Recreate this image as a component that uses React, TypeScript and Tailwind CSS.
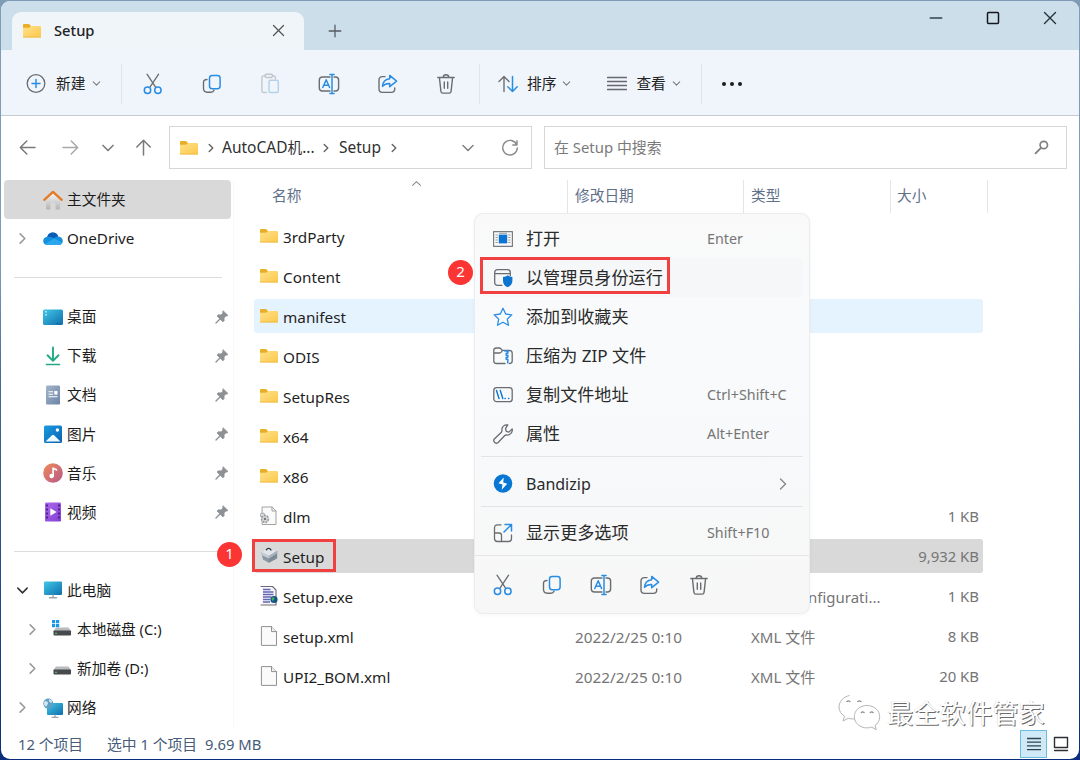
import { ReactNode } from 'react';
import clsx from 'clsx';

type IconProps = { size?: number; className?: string; children?: ReactNode; box?: string };

function Icon({ size = 20, className, children, box = '0 0 20 20' }: IconProps) {
  return (
    <svg
      width={size}
      height={size}
      viewBox={box}
      fill="none"
      strokeLinecap="round"
      strokeLinejoin="round"
      className={clsx('shrink-0', className)}
    >
      {children}
    </svg>
  );
}

const GRAY = '#6a6d70';
const BLUE = '#2a8de4';

const CutIcon = () => (
  <Icon size={22} box="0 0 22 22">
    <path d="M5 1.2 13.6 14.2M16.6 1.2 8 14.2" stroke={GRAY} strokeWidth="1.3" />
    <circle cx="5.5" cy="17.2" r="3.2" stroke={BLUE} strokeWidth="1.5" />
    <circle cx="15.9" cy="17.2" r="3.2" stroke={BLUE} strokeWidth="1.5" />
  </Icon>
);

const CopyIcon = () => (
  <Icon size={22} box="0 0 22 22">
    <path d="M6 6.5C3.500 6.500 2.500 7.600 2.500 9.500v5.800c0 2.500 1.300 3.900 3.800 3.900h3.600c1.600 0 2.700-.7 3.100-2" stroke={GRAY} strokeWidth="1.400" />
    <rect x="8.500" y="2.500" width="10.600" height="13.200" rx="2.600" stroke={BLUE} strokeWidth="1.500" />
  </Icon>
);

const PasteIcon = () => (
  <Icon size={22} box="0 0 22 22">
    <path d="M7.500 19.600H4.500c-1 0-1.600-.6-1.600-1.600V4.500c0-1 .6-1.600 1.600-1.600H6M13.600 2.900h1.200c1 0 1.600.6 1.600 1.600V6" stroke="#c6cbd1" strokeWidth="1.500" />
    <rect x="6" y="1.200" width="7.600" height="3.200" rx="1.600" stroke="#c0c5cb" strokeWidth="1.500" />
    <rect x="10" y="7.200" width="9.300" height="12.400" rx="1.700" stroke="#b3d2e8" strokeWidth="1.500" />
  </Icon>
);

const RenameIcon = () => (
  <Icon size={22} box="0 0 22 22">
    <path d="M12 4H4.500C2.500 4 1.300 5.200 1.300 7v8c0 1.800 1.200 3 3.200 3H12M16 4h1.400c2 0 3.200 1.200 3.200 3v8c0 1.800-1.200 3-3.200 3H16" stroke={GRAY} strokeWidth="1.400" />
    <path d="M4.800 14.500 8.200 6.800l3.400 7.700M6 12.200h4.400" stroke={BLUE} strokeWidth="1.500" />
    <path d="M14 1.500v19M11.900 1.500h4.200M11.900 20.500h4.200" stroke={BLUE} strokeWidth="1.500" />
  </Icon>
);

const ShareIcon = () => (
  <Icon size={22} box="0 0 22 22">
    <path d="M8 3.600H5.400C3.400 3.600 2 5 2 7v9c0 2 1.400 3.400 3.400 3.400h9c2 0 3.300-1.400 3.300-3.400v-1" stroke={GRAY} strokeWidth="1.400" />
    <path d="M12.700 2.400 19.600 8.100l-6.900 5.600v-3.300c-3.300-.1-5.500.8-7.200 3 .3-4.500 2.700-7.300 7.200-7.700z" stroke={BLUE} strokeWidth="1.500" />
  </Icon>
);

const TrashIcon = () => (
  <Icon size={22} box="0 0 22 22">
    <path d="M2.800 4.500h16.400M4.400 4.500l1.500 13.700c.1 1.200.9 1.900 2 1.900h6.200c1.100 0 1.900-.7 2-1.900l1.500-13.700M8.300 4.300C8.300 2.700 9.400 1.800 11 1.800s2.700.9 2.700 2.500M9.300 9v6.300M12.700 9v6.300" stroke={GRAY} strokeWidth="1.400" />
  </Icon>
);

function Chevron({ dir, size = 14, color = '#666', w = 1.4 }: { dir: 'up' | 'down' | 'right'; size?: number; color?: string; w?: number }) {
  const d = { up: 'M2 9.500 7 4.500l5 5', down: 'M2 4.500l5 5 5-5', right: 'M4.500 2l5 5-5 5' }[dir];
  return (
    <Icon size={size} box="0 0 14 14">
      <path d={d} stroke={color} strokeWidth={w} />
    </Icon>
  );
}

const FolderIcon = () => (
  <Icon size={18} box="0 0 18 18">
    <path d="M0 3.200C0 2.400.5 2 1.200 2h4.300c.6 0 1 .2 1.400.7L8 4.200V8H0z" fill="#e9ad28" />
    <path d="M0 5.800h5.700c.5 0 .8-.2 1.100-.5l.7-.8c.3-.3.6-.5 1.100-.5h8.200c.7 0 1.200.4 1.200 1.100v9.200c0 .8-.5 1.200-1.200 1.200H1.200C.5 15.500 0 15.100 0 14.300z" fill="url(#folderFill)" />
    <path d="M.3 15h17.400" stroke="#eeb840" strokeWidth=".8" />
  </Icon>
);

const HomeIcon = () => (
  <Icon>
    <path d="M3 9.500 10 3.500l7 6v9c0 .6-.4 1-1 1h-3.500v-5c0-1.400-1-2.300-2.500-2.300s-2.500.9-2.500 2.300v5H4c-.6 0-1-.4-1-1z" fill="url(#homeFill)" />
    <path d="M1.300 9.800 10 1.900l8.700 7.900" stroke="#e57b25" strokeWidth="2.400" />
  </Icon>
);

const CloudIcon = () => (
  <Icon>
    <path d="M4.700 16C2.200 16 .2 14.400.2 12s1.800-4 4-4.200C5.200 5 7.300 3.600 9.800 3.600c2.600 0 4.600 1.400 5.400 3.800 2.600.1 4.600 1.900 4.600 4.400S18 16 15.600 16z" fill="#1490df" />
    <path d="M4.200 7.800C5.200 5 7.300 3.600 9.800 3.600c2.600 0 4.600 1.400 5.400 3.800-2.200-.1-3.400 1-4.400 2.100-1.600-1.300-3.700-2-6.600-1.700z" fill="#0b5cb5" />
    <path d="M10.800 9.500 2 15c.8.700 1.700 1 2.700 1h10.900c1.800 0 3.200-.8 3.900-2.200z" fill="#2ba7ee" />
  </Icon>
);

const DesktopIcon = () => (
  <Icon>
    <rect x="0" y="2.500" width="20" height="15.500" rx="1.500" fill="url(#screenFill)" />
    <path d="M2.300 4.800h1.500M2.300 7.800h1.500" stroke="#c8f0ff" strokeWidth="1.500" strokeLinecap="butt" />
    <path d="M13.500 16.500h4.500" stroke="#0b6494" strokeDasharray="1.500 1" strokeLinecap="butt" />
  </Icon>
);

const DownloadIcon = () => (
  <Icon>
    <path d="M10 1.500v13M4.500 9.300 10 14.700l5.500-5.400" stroke="#24a987" strokeWidth="1.900" />
    <path d="M3.500 18.500h13" stroke="#24a987" strokeWidth="1.700" />
  </Icon>
);

const DocumentIcon = () => (
  <Icon>
    <rect x="3" y="0.500" width="14" height="19" rx="1.300" fill="url(#docFill)" />
    <path d="M5.500 6.700h4.500M5.500 9.200h4.500M5.500 11.800h9" stroke="#fff" strokeWidth="1.100" strokeLinecap="butt" />
    <rect x="11.300" y="6" width="3.200" height="3.600" fill="#fff" />
  </Icon>
);

const PictureIcon = () => (
  <Icon>
    <rect x="1" y="1.500" width="18" height="17.500" rx="1.500" fill="url(#picFill)" />
    <path d="M2.500 17.500 9 11.200c.7-.7 1.400-.7 2.100 0l6.400 6.300z" fill="#eef8ff" />
    <circle cx="14.400" cy="6" r="1.700" fill="#fff" />
  </Icon>
);

const MusicIcon = () => (
  <Icon>
    <circle cx="10" cy="10" r="9.800" fill="url(#musicFill)" />
    <circle cx="8.600" cy="13" r="2.200" fill="#fff" />
    <path d="M10.100 13V5.200l3.400 1.600" stroke="#fff" strokeWidth="1.700" />
  </Icon>
);

const VideoIcon = () => (
  <Icon>
    <rect x="2" y=".5" width="16" height="19" rx="1.300" fill="url(#videoFill)" />
    <path d="M4 2.500v16M16 2.500v16" stroke="#4c208e" strokeWidth="1.900" strokeDasharray="2 2" strokeLinecap="butt" />
    <path d="M7.300 6.300 13.500 10l-6.200 3.700z" fill="#fff" />
  </Icon>
);

const MonitorIcon = () => (
  <Icon>
    <rect x="1" y="1.500" width="18" height="13.500" rx="1" fill="url(#screenFill)" />
    <path d="M10 15v2.200M6.500 17.700h7" stroke="#9aa3aa" strokeWidth="1.400" />
  </Icon>
);

const DriveIcon = ({ system = false }: { system?: boolean }) => (
  <Icon>
    {system && <path d="M0 0h3.200v3.200H0zM4 0h3.200v3.200H4zM0 4h3.200v3.200H0zM4 4h3.200v3.200H4z" fill="#1c97e2" />}
    <path d="M4 7.500h12.500L19 11H1.500z" fill="#b9bcbe" />
    <rect x="1.500" y="10.500" width="17.500" height="5" rx=".8" fill="#47494c" />
    <rect x="3" y="12.800" width="2" height="1" fill="#56d26c" />
  </Icon>
);

const NetworkIcon = () => (
  <Icon>
    <rect x="4" y="5" width="16" height="12" rx="1" fill="url(#screenFill)" />
    <path d="M12 17v2M9 19.300h6" stroke="#9aa3aa" strokeWidth="1.200" />
    <circle cx="5.300" cy="5.600" r="5" fill="#5f9fc4" />
    <path d="M2 3c2 0 3 .7 3 2.200S3.600 7 3.400 8.800C1.500 8 .5 6 1 4.400zM6 1c1 .8 2.500 1 3.500 2.500L8 5 6 3.400z" fill="#cfe4ee" />
  </Icon>
);

const PinIcon = () => (
  <Icon size={14} box="0 0 14 14">
    <path d="M8.300.9 13 5.500l-1.200.6-.9-.1-1.900 2 .2 2.600-1.300 1.300L2 6l1.300-1.300 2.700.2 1.900-1.900-.2-1z" fill="#8c9196" stroke="#8c9196" strokeWidth=".7" />
    <path d="M4.700 9.200 1 13" stroke="#8c9196" strokeWidth="1.300" />
  </Icon>
);

const PageIcon = () => (
  <Icon size={20}>
    <path d="M1.800.6h9.700l5 5v13.800H1.800z" fill="#fafafa" stroke="#919191" strokeWidth="1" />
    <path d="M11.500.6v5h5" stroke="#919191" strokeWidth="1" fill="#eee" />
  </Icon>
);

const GearPageIcon = () => (
  <Icon size={20}>
    <path d="M2.500 1h9.500l4 4v13.500H2.500z" fill="#fafafa" stroke="#a2a2a2" strokeWidth="1" />
    <path d="M12 1v4h4" stroke="#a2a2a2" />
    <circle cx="2.500" cy="9" r="2" stroke="#aab0b4" strokeWidth="1.300" strokeDasharray="1.500 .7" fill="#e4e4e4" />
    <circle cx="5" cy="13" r="3.400" stroke="#9a9ea2" strokeWidth="1.700" strokeDasharray="2 .9" strokeLinecap="butt" fill="#dadada" />
    <circle cx="5" cy="13" r="1.200" fill="#777" />
  </Icon>
);

const InstallerIcon = () => (
  <Icon size={20}>
    <path d="M1 6 8.500 2l8.500 3.200v7.200L8.800 16.800 3 13.500z" fill="#8b97a1" />
    <path d="M.5 6 8.500 2l8.700 3-8 5z" fill="#dfe5ea" />
    <path d="M9.200 10 17.200 5v7L8.800 16.800z" fill="#7d8b97" />
    <path d="M.5 6 9.200 10v2.500L1.500 9z" fill="#c6ced4" />
    <path d="M9.200 10 17.200 5v2.300l-8 5.200z" fill="#aab5be" />
    <path d="M6.500 3.800c.7-1.800 3.300-2 4.500.2" stroke="#2c3338" strokeWidth="1.400" />
  </Icon>
);

const ConfigIcon = () => (
  <Icon size={20}>
    <path d="M2 .5h10.500l3.500 3.500v15H2z" fill="#f6f6fb" />
    <path d="M1 .5h11.500L16 4v15H1" stroke="#6c6c74" strokeWidth="1.100" />
    <path d="M3 3.500h7.500M3 6h10.500M3 8.500h10.500M3 11h8.500M3 13.500h7M3 16h7" stroke="#6565b3" strokeWidth="1.300" strokeLinecap="butt" />
    <circle cx="14" cy="13.500" r="3.600" fill="#194f8b" />
    <path d="M12 11.800c1.500-.8 2.800-.2 2.500.9s-1.700 1-1.200 2.800c-1.500-.7-2.200-2.300-1.300-3.700z" fill="#3bb54a" />
  </Icon>
);

const navItems: {
  label?: string;
  icon?: ReactNode;
  arrow?: 'right' | 'down';
  indent?: boolean;
  pinned?: boolean;
  active?: boolean;
}[] = [
  { label: '主文件夹', icon: <HomeIcon />, active: true },
  { label: 'OneDrive', icon: <CloudIcon />, arrow: 'right' },
  {},
  { label: '桌面', icon: <DesktopIcon />, pinned: true },
  { label: '下载', icon: <DownloadIcon />, pinned: true },
  { label: '文档', icon: <DocumentIcon />, pinned: true },
  { label: '图片', icon: <PictureIcon />, pinned: true },
  { label: '音乐', icon: <MusicIcon />, pinned: true },
  { label: '视频', icon: <VideoIcon />, pinned: true },
  {},
  { label: '此电脑', icon: <MonitorIcon />, arrow: 'down' },
  { label: '本地磁盘 (C:)', icon: <DriveIcon system />, arrow: 'right', indent: true },
  { label: '新加卷 (D:)', icon: <DriveIcon />, arrow: 'right', indent: true },
  { label: '网络', icon: <NetworkIcon />, arrow: 'right' }
];

type FileRow = { name: string; icon: ReactNode; date?: string; type?: string; size?: string };

const files: FileRow[] = [
  { name: '3rdParty', icon: <FolderIcon /> },
  { name: 'Content', icon: <FolderIcon /> },
  { name: 'manifest', icon: <FolderIcon /> },
  { name: 'ODIS', icon: <FolderIcon /> },
  { name: 'SetupRes', icon: <FolderIcon /> },
  { name: 'x64', icon: <FolderIcon /> },
  { name: 'x86', icon: <FolderIcon /> },
  { name: 'dlm', icon: <GearPageIcon />, size: '1 KB' },
  { name: 'Setup', icon: <InstallerIcon />, size: '9,932 KB' },
  { name: 'Setup.exe', icon: <ConfigIcon />, type: 'nfigurati...', size: '1 KB' },
  { name: 'setup.xml', icon: <PageIcon />, date: '2022/2/25 0:10', type: 'XML 文件', size: '8 KB' },
  { name: 'UPI2_BOM.xml', icon: <PageIcon />, date: '2022/2/25 0:10', type: 'XML 文件', size: '20 KB' }
];

const menuItems = [
  {
    label: '打开',
    keys: 'Enter',
    icon: (
      <Icon>
        <rect x=".6" y="2.600" width="18.800" height="14.800" fill="#fafafa" stroke="#7a7d80" strokeWidth="1.200" />
        <path d="M2.500 6h2.300M2.500 8.500h2.300M2.500 11h2.300M2.500 13.500h2.300M15.200 6h2.300M15.200 8.500h2.300M15.200 11h2.300M15.200 13.500h2.300M6 4.300h8" stroke="#999" strokeLinecap="butt" />
        <rect x="5.800" y="5.600" width="8.400" height="8.800" fill="#0a74d0" />
      </Icon>
    )
  },
  {
    label: '以管理员身份运行',
    icon: (
      <Icon>
        <path d="M9 17.300H4.500C2.800 17.300 1.700 16.200 1.700 14.500v-10c0-1.700 1.100-2.800 2.800-2.800h10c1.700 0 2.800 1.100 2.800 2.800v3M1.700 5.700h15.600" stroke={GRAY} strokeWidth="1.300" />
        <path d="M14.700 7.300c1.300 1 2.800 1.500 4.700 1.600v3.500c0 3.300-1.700 5.500-4.700 6.900-3-1.400-4.700-3.600-4.700-6.900V8.900c1.900-.1 3.400-.6 4.700-1.600z" fill="#0a74d0" />
      </Icon>
    )
  },
  {
    label: '添加到收藏夹',
    icon: (
      <Icon>
        <path d="M10 1.300l2.700 5.700 6.100.8-4.500 4.300 1.200 6.200L10 15.300l-5.500 3 1.200-6.200L1.200 7.800l6.100-.8z" stroke={BLUE} strokeWidth="1.300" />
      </Icon>
    )
  },
  {
    label: '压缩为 ZIP 文件',
    icon: (
      <Icon>
        <path d="M12 17.500H3.500C1.700 17.500.8 16.600.8 15V4.300c0-1.500.9-2.300 2.400-2.300h3c.8 0 1.300.3 1.800.9l1.200 1.400h6.800c2 0 3.200.9 3.200 2.700v8c0 1.600-1 2.500-2.700 2.500M.8 7h5.700c.8 0 1.200-.2 1.700-.8l1.200-1.600" stroke={GRAY} strokeWidth="1.300" />
        <path d="M11.800 5h4M14.800 5.200v2.100h-1.600v2h1.600v2h-1.600v2h1.600v3.700" stroke={BLUE} strokeWidth="1.500" />
      </Icon>
    )
  },
  {
    label: '复制文件地址',
    keys: 'Ctrl+Shift+C',
    icon: (
      <Icon>
        <rect x=".8" y="2.700" width="18.400" height="14" rx="2.800" stroke={GRAY} strokeWidth="1.300" />
        <path d="M3.500 5.500 6 13.500M7.300 5.500l2.500 8M12 13.500h.3M15.500 13.500h.3" stroke="#0a74d0" strokeWidth="1.400" />
      </Icon>
    )
  },
  {
    label: '属性',
    keys: 'Alt+Enter',
    icon: (
      <Icon>
        <path d="M14.800.9c-3.300-.6-6.400 2-5.900 5.600.1.800 0 1.200-.5 1.700L1.300 15c-1.700 2.300 1.100 5.300 3.600 3.700l6.900-7.200c.5-.5.9-.6 1.600-.5 3.700.4 6.500-2.600 5.800-6.100l-3.300 3.200-2.600-.8-.8-2.600z" stroke={GRAY} strokeWidth="1.300" />
      </Icon>
    )
  }
];

function MenuRow({ icon, label, keys, arrow, hover }: { icon: ReactNode; label: string; keys?: string; arrow?: boolean; hover?: boolean }) {
  return (
    <div className={clsx('mx-1.5 flex h-[39px] items-center rounded', hover && 'bg-[#f5f7f9]')}>
      <div className="ml-3 w-[33px]">{icon}</div>
      <div className={clsx('w-[181px] whitespace-nowrap text-[#2a2a2a]', label === 'Bandizip' ? 'text-[16px]' : 'text-[17.1px]')}>{label}</div>
      {keys && <div className="text-[14.3px] whitespace-nowrap text-[#757575]">{keys}</div>}
      {arrow && (
        <div className="ml-[69px]">
          <Chevron dir="right" color="#888" />
        </div>
      )}
    </div>
  );
}

function ContextMenu() {
  return (
    <div className="absolute top-[213px] left-[473px] h-[401px] w-[336px] rounded-[9px] border border-[#ececec] bg-[#f9f9f9] bg-linear-to-b from-[#f9f9f9] via-[#f8fafc] via-30% to-[#f7f7f7] pt-[5px] shadow-[0_1px_4px_rgba(0,0,0,0.04)]">
      {menuItems.map((item, index) => (
        <MenuRow key={item.label} {...item} hover={index === 1} />
      ))}
      <div className="mx-1.5 mt-[3px] mb-[7px] h-px bg-[#e4e4e4]" />
      <MenuRow
        label="Bandizip"
        arrow
        icon={
          <Icon>
            <circle cx="10" cy="9.500" r="9.300" fill="#0877d4" />
            <path d="M10.800 3.500 5.500 9.300l4 1.200-.8 5.200 5.500-6-4-1.200z" fill="#fff" />
          </Icon>
        }
      />
      <div className="mx-1.5 mt-[3px] mb-1.5 h-px bg-[#e4e4e4]" />
      <MenuRow
        label="显示更多选项"
        keys="Shift+F10"
        icon={
          <Icon>
            <path d="M8 1.800H4.500C2.500 1.800 1.500 3 1.500 5v10.500c0 2 1 3 3 3h11c2 0 3-1 3-3V12M1.500 10h4.700c1.400 0 2.300.9 2.300 2.300v6" stroke={GRAY} strokeWidth="1.300" />
            <path d="M12 1.500h6.500V8M18.300 1.700 11 9" stroke={BLUE} strokeWidth="1.500" />
          </Icon>
        }
      />
      <div className="mt-[3px] h-px bg-[#e6e6e6]" />
      <div className="flex h-[57px] items-center gap-[27px] pl-[17px]">
        <CutIcon />
        <CopyIcon />
        <RenameIcon />
        <ShareIcon />
        <TrashIcon />
      </div>
    </div>
  );
}

function Badge({ value, className }: { value: string; className: string }) {
  return (
    <div className={clsx('absolute flex h-[25px] w-[25px] items-center justify-center rounded-full bg-[#fb3434] pb-[3px] text-[15px] text-white', className)}>
      {value}
    </div>
  );
}

function TitleBar() {
  return (
    <div className="flex h-[49px] items-end bg-[#cddeeb]">
      <div className="ml-[11px] flex h-[38px] w-[292px] items-center rounded-t-[9px] bg-[#f0f5fa] pr-[19px] pl-[11px]">
        <FolderIcon />
        <span className="ml-[13px] flex-1 pb-0.5 text-[14.7px] font-medium text-[#222]">Setup</span>
        <Icon size={13} box="0 0 13 13" className="mb-0.5">
          <path d="M1.500 1.500l10 10M11.500 1.500l-10 10" stroke="#555" strokeWidth="1.300" />
        </Icon>
      </div>
      <div className="ml-6 flex h-[38px] items-center">
        <Icon size={14} box="0 0 14 14">
          <path d="M7 1.200v11.600M1.200 7h11.600" stroke="#555b60" strokeWidth="1.300" />
        </Icon>
      </div>
      <div className="mr-[22px] ml-auto flex gap-[43px] self-start pt-[10px]">
        <Icon size={14} box="0 0 14 14">
          <path d="M1.200 7h11.600" stroke="#33404a" strokeWidth="1.300" />
        </Icon>
        <Icon size={14} box="0 0 14 14">
          <rect x="1.500" y="1.500" width="11" height="11" rx="1" stroke="#14181c" strokeWidth="1.500" />
        </Icon>
        <Icon size={14} box="0 0 14 14">
          <path d="M1.500 1.500l11 11M12.500 1.500l-11 11" stroke="#26323b" strokeWidth="1.400" />
        </Icon>
      </div>
    </div>
  );
}

function Toolbar() {
  const tools = [CutIcon, CopyIcon, PasteIcon, RenameIcon, ShareIcon, TrashIcon];
  return (
    <div className="flex h-[66px] items-center border-b border-[#c3ccd6] bg-[#f0f5fb] pt-0.5 text-[14.7px] text-[#222]">
      <div className="flex h-[40px] w-[121px] items-center border-r border-[#e0e5ea] pl-[25px]">
        <Icon>
          <circle cx="10" cy="9.500" r="8.800" stroke="#686b6e" strokeWidth="1.300" />
          <path d="M10 5.500v8M6 9.500h8" stroke={BLUE} strokeWidth="1.500" />
        </Icon>
        <span className="mr-[7px] ml-2.5">新建</span>
        <Chevron dir="down" size={9} w={1.6} color="#777" />
      </div>
      <div className="flex w-[357px] pl-0.5">
        {tools.map((Tool, index) => (
          <div key={index} className="flex w-[58.6px] justify-center">
            <Tool />
          </div>
        ))}
      </div>
      <div className="flex h-[40px] w-[223px] items-center border-x border-[#e0e5ea] pl-[18px]">
        <Icon>
          <path d="M6 17.500v-15M1 7.500l5-5 5 5" stroke={GRAY} strokeWidth="1.400" />
          <path d="M14.500 2.500v15M9.800 12.800l4.700 4.700 4.700-4.700" stroke={BLUE} strokeWidth="1.500" />
        </Icon>
        <span className="mr-1.5 ml-[9px]">排序</span>
        <Chevron dir="down" size={9} w={1.6} color="#777" />
        <Icon className="ml-[36px]">
          <path d="M.5 3.500h19M.5 7.500h19M.5 11.500h19M.5 15.500h19" stroke="#66696c" strokeWidth="1.300" />
        </Icon>
        <span className="mr-1.5 ml-[9px]">查看</span>
        <Chevron dir="down" size={9} w={1.6} color="#777" />
      </div>
      <div className="flex gap-1 pl-[20px]">
        <i className="h-[4px] w-[4px] rounded-full bg-[#1c1c1c]" />
        <i className="h-[4px] w-[4px] rounded-full bg-[#1c1c1c]" />
        <i className="h-[4px] w-[4px] rounded-full bg-[#1c1c1c]" />
      </div>
    </div>
  );
}

function AddressBar() {
  return (
    <div className="flex h-[64px] pt-2.5">
      <div className="flex h-[43px] w-[168px] items-center pl-[18px]">
        <Icon size={17} box="0 0 17 17">
          <path d="M16 8.500H1.500M7.800 2 1.300 8.500l6.500 6.500" stroke="#7a7a7a" strokeWidth="1.500" />
        </Icon>
        <Icon size={17} box="0 0 17 17" className="ml-[26px]">
          <path d="M1 8.500h14.500M9.200 2l6.500 6.500L9.200 15" stroke="#a9a9a9" strokeWidth="1.500" />
        </Icon>
        <span className="mr-[20px] ml-[22px]">
          <Chevron dir="down" color="#808080" w={1.7} />
        </span>
        <Icon size={17} box="0 0 17 17">
          <path d="M8.500 16V1.500M1.800 8l6.700-6.700L15.200 8" stroke="#7a7a7a" strokeWidth="1.500" />
        </Icon>
      </div>
      <div className="flex h-[43px] w-[363px] items-center border border-[#d6d6d6] pl-[10px] text-[15.500px] text-[#303030]">
        <FolderIcon />
        <span className="mr-[6px] ml-[8px]">
          <Chevron dir="right" size={10} w={2} />
        </span>
        <span className="w-[99px] whitespace-nowrap">
          AutoCAD<span className="text-[14.7px]">机</span>...
        </span>
        <Chevron dir="right" size={10} w={2} />
        <span className="mr-[9px] ml-[8px] w-[41px]">Setup</span>
        <Chevron dir="right" size={10} w={2} />
        <span className="ml-[62px]">
          <Chevron dir="down" color="#808080" w={1.5} />
        </span>
        <Icon size={18} box="0 0 18 18" className="ml-[26px]">
          <path d="M15.800 6A7.300 7.300 0 1 0 16.300 9M16 1.800V6h-4.200" stroke="#8a8a8a" strokeWidth="1.400" />
        </Icon>
      </div>
      <div className="ml-3 flex h-[43px] w-[523px] items-center justify-between border border-[#d6d6d6] pr-[17px] pl-[9px] text-[14.9px] text-[#7a7a7a]">
        <span>在 Setup 中搜索</span>
        <Icon size={15} box="0 0 15 15">
          <circle cx="9.800" cy="5" r="3.700" stroke="#808080" strokeWidth="1.700" />
          <path d="M7 7.800 1.500 13.300" stroke="#808080" strokeWidth="1.900" />
        </Icon>
      </div>
    </div>
  );
}

function Sidebar() {
  return (
    <nav className="w-[233px] border-r border-[#f9f9f9] pl-[3px]">
      {navItems.map((item, index) =>
        item.label ? (
          <div
            key={item.label}
            className={clsx('flex h-[39.1px] w-[227px] items-center pr-0.5', item.active && 'rounded-sm bg-[#d9d9d9]', item.indent ? 'pl-[22px]' : 'pl-[12px]')}
          >
            <span className="w-[14px]">
              {item.arrow && <Chevron dir={item.arrow} size={13} color={item.arrow === 'down' ? '#333' : '#999'} w={1.7} />}
            </span>
            <span className={item.indent ? 'ml-[12px]' : 'ml-[13px]'}>{item.icon}</span>
            <span
              className={clsx(
                'flex-1 text-[#1c1c1c]',
                item.indent ? 'ml-[5px]' : 'ml-[4px]',
                item.label === 'OneDrive' ? 'text-[15.2px]' : 'pb-px text-[14.7px]'
              )}
            >
              {item.label}
            </span>
            {item.pinned && <PinIcon />}
          </div>
        ) : (
          <div key={index} className="flex h-[39.1px] items-center pr-[11px] pl-[10px]">
            <div className="h-px w-full bg-[#dcdcdc]" />
          </div>
        )
      )}
    </nav>
  );
}

function FileList() {
  return (
    <main className="ml-[20px] w-[734px]">
      <div className="relative flex h-[33px] text-[14.7px] text-[#5f7089]">
        <div className="flex w-[313px] items-center pb-0.5 pl-[18px]">名称</div>
        <div className="flex w-[176px] items-center border-l border-[#e5e5e5] pb-0.5 pl-[7px]">修改日期</div>
        <div className="flex w-[147px] items-center border-l border-[#e5e5e5] pb-0.5 pl-[7px]">类型</div>
        <div className="flex w-[98px] items-center border-x border-[#e5e5e5] pb-0.5 pl-[6px]">大小</div>
        <div className="absolute -top-0.5 left-[157px]">
          <Chevron dir="up" size={11} color="#888" w={1.3} />
        </div>
      </div>
      <div className="flex flex-col gap-1.5 pt-[6px] text-[15.3px]">
        {files.map((file) => (
          <div
            key={file.name}
            className={clsx(
              'flex h-[34px] w-[729px] items-center rounded-[3px] pr-[4px] text-[#757575]',
              file.name === 'manifest' && 'bg-[#e5f3ff]',
              file.name === 'Setup' && 'bg-[#d9d9d9]'
            )}
          >
            <span className="w-[29px] pl-[6px]">{file.icon}</span>
            <span className="w-[292px] pt-0.5 text-[#1f1f1f]">{file.name}</span>
            <span className="w-[176px] pt-0.5">{file.date}</span>
            <span className={clsx('w-[140px] pt-0.5 text-[15px] whitespace-nowrap', file.name === 'Setup.exe' && 'pl-[57px]')}>{file.type}</span>
            <span className="flex-1 pt-px text-right text-[14.9px]">{file.size}</span>
          </div>
        ))}
      </div>
    </main>
  );
}

function StatusBar() {
  return (
    <footer className="flex h-[31px] items-center pt-px pr-[10px] pl-[17px] text-[14.8px] text-[#475b7a]">
      <span className="w-[89px]">12 个项目</span>
      <span className="w-[98px]">选中 1 个项目</span>
      <span>9.69 MB</span>
      <div className="ml-auto flex h-[28px] w-[27px] items-center justify-center border border-[#6cbbe0] bg-[#cfeaf6]">
        <Icon size={14} box="0 0 14 14">
          <path d="M0 1.500h14M0 5.200h14M0 8.900h14M0 12.600h14" stroke="#2c4450" strokeWidth="1.300" />
        </Icon>
      </div>
      <Icon size={16} box="0 0 16 16" className="ml-[6px]">
        <rect x="1.500" y="1.500" width="13" height="10" stroke="#2c3034" strokeWidth="1.400" />
        <path d="M1.500 14.500h13" stroke="#2c3034" strokeWidth="1.400" />
      </Icon>
    </footer>
  );
}

function Watermark() {
  return (
    <div className="absolute top-[692px] left-[836px] flex items-center gap-[6px]">
      <svg width="44" height="38" viewBox="0 0 44 38" fill="#fff" stroke="#b5b5b5" strokeWidth="1" strokeLinejoin="round">
        <path d="M16.500 2C8.500 2 2 7.400 2 14c0 3.800 2.100 7.100 5.500 9.300L6 28l5.400-2.800c1.600.5 3.300.8 5.100.8 8 0 14.500-5.400 14.500-12S24.500 2 16.500 2z" strokeDasharray="62 36" strokeDashoffset="-4" />
        <path d="M30 12.500c-7 0-12.700 5-12.700 11.200S23 34.900 30 34.900c1.600 0 3.200-.3 4.600-.8l4.700 2.600-1.300-4.200c2.900-2 4.700-5.200 4.700-8.800 0-6.200-5.700-11.200-12.700-11.200z" />
        <path d="M9.500 9c.8-1.600 3-1.600 3.800 0M20.500 9c.8-1.600 3-1.600 3.800 0M24 20c.7-1.500 2.700-1.500 3.400 0M33 20c.7-1.500 2.700-1.500 3.400 0" fill="none" stroke="#888" strokeWidth="1.300" />
      </svg>
      <span className="pt-0.5 text-[26.3px] leading-[38px] whitespace-nowrap text-white [text-shadow:1px_1px_0_#6a6a6a,-0.5px_-0.5px_0_#d8d8d8]">最全软件管家</span>
    </div>
  );
}

export default function App() {
  return (
    <div className="h-[760px] w-[1080px] overflow-hidden bg-linear-to-b from-[#7f9cb6] from-35% via-[#47699a] via-50% to-[#0b2c7c] font-['Noto_Sans','Noto_Sans_CJK_SC',sans-serif]">
      <svg width="0" height="0" className="absolute">
        <defs>
          <linearGradient id="folderFill" x1="0" y1="0" x2="1" y2="1">
            <stop stopColor="#ffe08a" />
            <stop offset="1" stopColor="#fcc94a" />
          </linearGradient>
          <linearGradient id="homeFill" x1="0" y1="0" x2="0" y2="1">
            <stop stopColor="#f4f4f4" />
            <stop offset="1" stopColor="#b5b5b8" />
          </linearGradient>
          <linearGradient id="screenFill" x1="0" y1="0" x2="1" y2="1">
            <stop stopColor="#41c7e6" />
            <stop offset="1" stopColor="#0f6fae" />
          </linearGradient>
          <linearGradient id="docFill" x1="0" y1="0" x2="1" y2="1">
            <stop stopColor="#a3b5cb" />
            <stop offset="1" stopColor="#6c84a5" />
          </linearGradient>
          <linearGradient id="picFill" x1="0" y1="0" x2="1" y2="1">
            <stop stopColor="#1a9be2" />
            <stop offset="1" stopColor="#0b62b0" />
          </linearGradient>
          <linearGradient id="musicFill" x1="0" y1="0" x2="1" y2="1">
            <stop stopColor="#ee8c58" />
            <stop offset="1" stopColor="#b8568a" />
          </linearGradient>
          <linearGradient id="videoFill" x1="0" y1="0" x2="1" y2="1">
            <stop stopColor="#ac68ea" />
            <stop offset="1" stopColor="#8440d2" />
          </linearGradient>
        </defs>
      </svg>
      <div className="relative ml-px h-[759px] w-[1078px] pt-px">
        <div className="h-[758px] overflow-hidden rounded-[9px] bg-white">
          <TitleBar />
          <Toolbar />
          <AddressBar />
          <div className="flex h-[548px]">
            <Sidebar />
            <FileList />
          </div>
          <StatusBar />
        </div>
        <ContextMenu />
        <div className="absolute top-[257px] left-[479px] h-[37px] w-[190px] border-3 border-[#f04040]" />
        <div className="absolute top-[539px] left-[251px] h-[33px] w-[84px] border-3 border-[#f04040]" />
        <Badge value="1" className="top-[542px] left-[216px]" />
        <Badge value="2" className="top-[260px] left-[447px]" />
        <Watermark />
      </div>
    </div>
  );
}
